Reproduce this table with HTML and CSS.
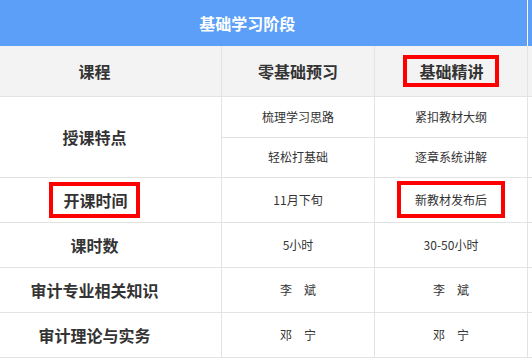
FILE: index.html
```html
<!DOCTYPE html>
<html lang="zh-CN">
<head>
    <meta charset="UTF-8">
    <meta name="viewport" content="width=device-width, initial-scale=1.0">
    <title>基础学习阶段</title>
    <link rel="stylesheet" href="styles.css">
</head>
<body>
    <div class="table-wrap">
        <table class="course-table">
            <colgroup>
                <col class="col-name">
                <col class="col-plan">
                <col class="col-plan">
                <col class="col-more">
            </colgroup>
            <tr class="stage-row">
                <th colspan="3">基础学习阶段</th>
                <th></th>
            </tr>
            <tr class="head-row">
                <th>课程</th>
                <th>零基础预习</th>
                <th><span class="mark mark-head">基础精讲</span></th>
                <td></td>
            </tr>
            <tr class="sub-row">
                <th rowspan="2">授课特点</th>
                <td>梳理学习思路</td>
                <td>紧扣教材大纲</td>
                <td rowspan="2"></td>
            </tr>
            <tr class="sub-row sub-row-last">
                <td>轻松打基础</td>
                <td>逐章系统讲解</td>
            </tr>
            <tr>
                <th><span class="mark mark-label">开课时间</span></th>
                <td>11月下旬</td>
                <td><span class="mark mark-cell">新教材发布后</span></td>
                <td></td>
            </tr>
            <tr>
                <th>课时数</th>
                <td>5小时</td>
                <td>30-50小时</td>
                <td></td>
            </tr>
            <tr>
                <th>审计专业相关知识</th>
                <td>李　斌</td>
                <td>李　斌</td>
                <td></td>
            </tr>
            <tr>
                <th>审计理论与实务</th>
                <td>邓　宁</td>
                <td>邓　宁</td>
                <td></td>
            </tr>
        </table>
    </div>
</body>
</html>
```

FILE: styles.css
```css
body {
    margin: 0;
    padding: 0;
    background: #ffffff;
    font-family: "Noto Sans CJK SC", "Microsoft YaHei", sans-serif;
    color: #333;
}

.table-wrap {
    width: 532px;
    overflow: hidden;
}

.course-table {
    margin-left: -33px;
    border-collapse: collapse;
    table-layout: fixed;
    width: 600px;
}

.col-name { width: 254px; }
.col-plan { width: 153px; }
.col-more { width: 40px; }

.course-table th,
.course-table td {
    border: 1px solid #e3e3e3;
    text-align: center;
    vertical-align: middle;
    padding: 0;
    line-height: 20px;
}

.course-table tr {
    height: 45px;
}

.course-table th {
    font-size: 16px;
    font-weight: bold;
}

.course-table td {
    font-size: 12px;
}

.stage-row {
    height: 46px !important;
}

.stage-row th {
    background: #5c9ff9;
    color: #fff;
    border-top: none;
    border-bottom: none;
    border-left: none;
    border-right: 1px solid #ffffff;
}

.head-row {
    height: 50px !important;
}

.head-row th,
.head-row td {
    background: #f3f3f3;
    border-top: none;
}

.sub-row {
    height: 41px !important;
}

.sub-row-last {
    height: 40px !important;
}

/* red highlight boxes */
.mark {
    display: inline-block;
    border: 4px solid #ff0000;
}

.mark-head {
    padding: 2px 11px 2px 12px;
}

.mark-label {
    padding: 4px 8px 4px 10px;
}

.mark-cell {
    padding: 6px 14px;
    line-height: 17px;
}
```
